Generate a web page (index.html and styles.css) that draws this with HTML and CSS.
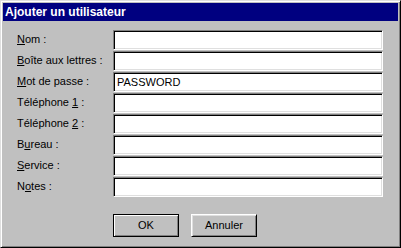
FILE: index.html
```html
<!DOCTYPE html>
<html lang="fr">
  <head>
    <meta charset="UTF-8" />
    <title>Ajouter un utilisateur</title>
    <link rel="stylesheet" href="styles.css">
  </head>
  <body>
    <!-- fenêtre de dialogue -->
    <div class="window">
      <div class="caption">Ajouter un utilisateur</div>
      <div class="content">
        <div class="form">
          <label class="label"><u>N</u>om :</label>
          <div class="field"></div>
          <label class="label"><u>B</u>oîte aux lettres :</label>
          <div class="field"></div>
          <label class="label"><u>M</u>ot de passe :</label>
          <div class="field">PASSWORD</div>
          <label class="label">Téléphone <u>1</u> :</label>
          <div class="field"></div>
          <label class="label">Téléphone <u>2</u> :</label>
          <div class="field"></div>
          <label class="label">B<u>u</u>reau :</label>
          <div class="field"></div>
          <label class="label"><u>S</u>ervice :</label>
          <div class="field"></div>
          <label class="label">N<u>o</u>tes :</label>
          <div class="field"></div>
        </div>
        <!-- boutons -->
        <div class="buttons">
          <div class="btn default">OK</div>
          <div class="btn">Annuler</div>
        </div>
      </div>
    </div>
  </body>
</html>
```

FILE: styles.css
```css
* {
  margin: 0;
  padding: 0;
  box-sizing: border-box;
}

body {
  font-family: "Liberation Sans", Arial, sans-serif;
  font-size: 11px;
  background-color: #c0c0c0;
}

/* cadre de la fenêtre */
.window {
  width: 401px;
  height: 248px;
  background-color: #c0c0c0;
  border-top: 1px solid #dfdfdf;
  border-left: 1px solid #dfdfdf;
  border-right: 1px solid #000;
  border-bottom: 1px solid #000;
  box-shadow: inset 1px 1px 0 #fff, inset -1px -1px 0 #808080;
  padding: 2px;
}

/* barre de titre */
.caption {
  height: 18px;
  background-color: #000080;
  color: #fff;
  font-size: 12px;
  font-weight: bold;
  line-height: 18px;
  padding-left: 2px;
}

.content {
  padding: 9px 14px 0 14px;
}

.form {
  display: grid;
  grid-template-columns: 96px 270px;
  grid-auto-rows: 20px;
  row-gap: 1px;
}

.label {
  display: block;
  line-height: 19px;
  color: #000;
  white-space: nowrap;
}

/* champ de saisie en creux */
.field {
  background-color: #fff;
  border-top: 1px solid #808080;
  border-left: 1px solid #808080;
  border-right: 1px solid #fff;
  border-bottom: 1px solid #fff;
  box-shadow: inset 1px 1px 0 #000, inset -1px -1px 0 #dfdfdf;
  padding-left: 3px;
  line-height: 18px;
  color: #000;
}

.buttons {
  display: flex;
  gap: 12px;
  margin-top: 17px;
  margin-left: 96px;
}

.btn {
  width: 66px;
  height: 23px;
  background-color: #c0c0c0;
  border-top: 1px solid #fff;
  border-left: 1px solid #fff;
  border-right: 1px solid #000;
  border-bottom: 1px solid #000;
  box-shadow: inset 1px 1px 0 #dfdfdf, inset -1px -1px 0 #808080;
  text-align: center;
  line-height: 21px;
  color: #000;
}

/* bouton par défaut avec cadre noir */
.btn.default {
  border: 1px solid #000;
  box-shadow: inset 1px 1px 0 #fff, inset -1px -1px 0 #808080;
}
```
